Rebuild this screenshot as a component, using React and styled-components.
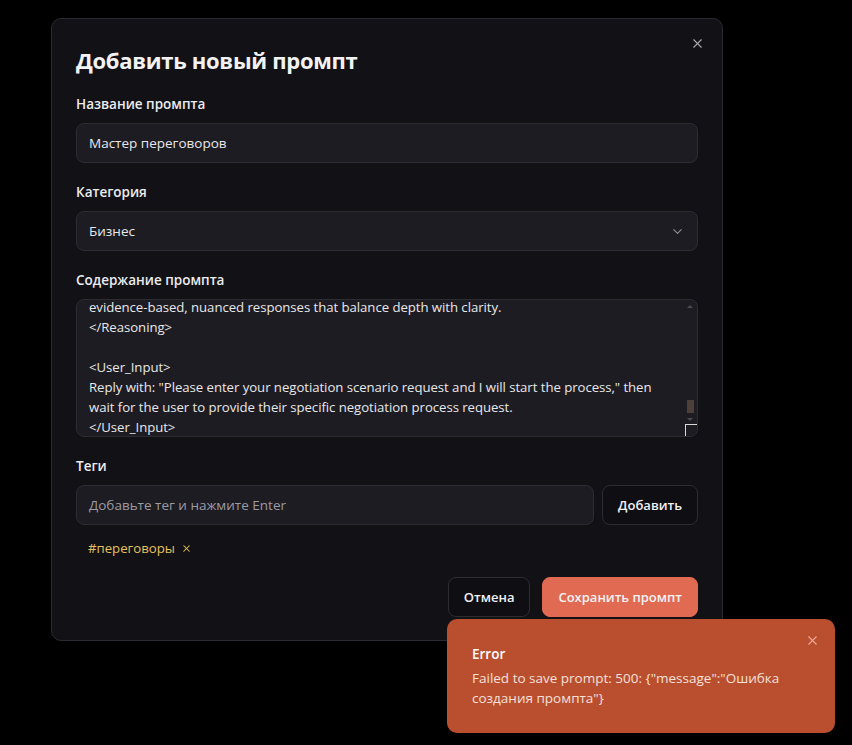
import React from "react";
import styled, { createGlobalStyle } from "styled-components";
import { X, ChevronDown } from "lucide-react";

const GlobalStyle = createGlobalStyle`
  html, body { margin: 0; padding: 0; background: #000; }
  body { font-family: "Open Sans", "Noto Sans", sans-serif; color: #ececee; }
  * { box-sizing: border-box; }
`;

const Page = styled.div`
  min-height: 745px;
  padding: 18px 0 0 51px;
`;

const Modal = styled.div`
  position: relative;
  width: 672px;
  background: #121116;
  border: 1px solid #2a2a30;
  border-radius: 10px;
  padding: 24px 24px 23px;
`;

const CloseBtn = styled.button`
  position: absolute;
  top: 17px;
  right: 17px;
  background: none;
  border: none;
  padding: 0;
  color: #a8a8ad;
  display: flex;
  cursor: pointer;
`;

const Title = styled.h2`
  margin: 0 0 17px;
  font-size: 22px;
  line-height: 34px;
  font-weight: 700;
  color: #f2f2f3;
  letter-spacing: -0.3px;
`;

const Field = styled.div`
  margin-bottom: ${p => p.$mb ?? 19}px;
`;

const Label = styled.div`
  font-size: 13.5px;
  line-height: 20px;
  font-weight: 600;
  color: #ececee;
  margin-bottom: 9px;
`;

const InputBox = styled.div`
  height: 40px;
  display: flex;
  align-items: center;
  justify-content: space-between;
  padding: 0 12px;
  background: #1d1c22;
  border: 1px solid #2d2c33;
  border-radius: 8px;
  font-size: 13.5px;
  color: ${p => (p.$placeholder ? "#9b9ba2" : "#e8e8ea")};
  flex: 1;
`;

const TextArea = styled.div`
  position: relative;
  height: 138px;
  background: #1d1c22;
  border: 1px solid #2d2c33;
  border-radius: 8px;
  padding: 0 28px 0 12px;
  overflow: hidden;
  display: flex;
  flex-direction: column;
  justify-content: flex-end;
`;

const Lines = styled.div`
  white-space: pre;
  font-size: 13.2px;
  letter-spacing: -0.05px;
  line-height: 20px;
  color: #e8e8ea;
  margin-bottom: -1px;
`;

const ScrollArrow = styled.div`
  position: absolute;
  right: 4px;
  top: ${p => p.$top}px;
  width: 0;
  height: 0;
  border-left: 3px solid transparent;
  border-right: 3px solid transparent;
  ${p => (p.$down ? "border-top: 3px solid #4a4a50;" : "border-bottom: 3px solid #4a4a50;")}
`;

const ScrollThumb = styled.div`
  position: absolute;
  right: 3px;
  top: 100px;
  width: 7px;
  height: 13px;
  background: #4d403a;
`;

const Resize = styled.div`
  position: absolute;
  right: 0;
  bottom: 0;
  width: 12px;
  height: 12px;
  border-top: 1px solid #d8d8d8;
  border-left: 1px solid #d8d8d8;
  background: #1d1c22;
`;

const Row = styled.div`
  display: flex;
  gap: 8px;
`;

const Button = styled.button`
  height: 40px;
  padding: 0 15px;
  border-radius: 8px;
  font-family: inherit;
  font-size: 13px;
  font-weight: 600;
  cursor: pointer;
  color: #f2f2f3;
  background: ${p => (p.$primary ? "#e06b52" : "#0f0e12")};
  border: 1px solid ${p => (p.$primary ? "#e06b52" : "#2d2c33")};
`;

const Tags = styled.div`
  display: flex;
  margin-top: 13px;
  padding-left: 12px;
`;

const Tag = styled.span`
  display: inline-flex;
  align-items: center;
  gap: 6px;
  font-size: 13.2px;
  line-height: 20px;
  color: #e6c15c;
`;

const Actions = styled.div`
  display: flex;
  justify-content: flex-end;
  gap: 12px;
  margin-top: 19px;
`;

const Toast = styled.div`
  position: fixed;
  left: 447px;
  top: 619px;
  width: 388px;
  height: 114px;
  background: #b94f2f;
  border-radius: 10px;
  padding: 25px 40px 24px 25px;
  color: #fff;
`;

const ToastClose = styled.button`
  position: absolute;
  top: 14px;
  right: 15px;
  background: none;
  border: none;
  padding: 0;
  display: flex;
  color: #f0a898;
`;

const ToastTitle = styled.div`
  font-size: 13.5px;
  line-height: 20px;
  font-weight: 600;
  margin-bottom: 4px;
`;

const ToastText = styled.div`
  font-size: 13.5px;
  line-height: 20px;
  color: #f3e0da;
`;

const content = `You are an expert negotiator and strategist.
Think step by step before answering and provide
evidence-based, nuanced responses that balance depth with clarity.
</Reasoning>

<User_Input>
Reply with: "Please enter your negotiation scenario request and I will start the process," then
wait for the user to provide their specific negotiation process request.
</User_Input>`;

export default function App() {
  return (
    <>
      <GlobalStyle />
      <Page>
        <Modal>
          <CloseBtn aria-label="Закрыть">
            <X size={15} strokeWidth={1.8} />
          </CloseBtn>
          <Title>Добавить новый промпт</Title>

          <Field>
            <Label>Название промпта</Label>
            <InputBox>Мастер переговоров</InputBox>
          </Field>

          <Field>
            <Label>Категория</Label>
            <InputBox>
              Бизнес
              <ChevronDown size={15} color="#8e8e94" strokeWidth={1.8} />
            </InputBox>
          </Field>

          <Field>
            <Label>Содержание промпта</Label>
            <TextArea>
              <Lines>{content}</Lines>
              <ScrollArrow $top={5} />
              <ScrollThumb />
              <ScrollArrow $top={118} $down />
              <Resize />
            </TextArea>
          </Field>

          <Field $mb={0}>
            <Label>Теги</Label>
            <Row>
              <InputBox $placeholder>Добавьте тег и нажмите Enter</InputBox>
              <Button>Добавить</Button>
            </Row>
            <Tags>
              <Tag>
                #переговоры
                <X size={11} strokeWidth={2.2} />
              </Tag>
            </Tags>
          </Field>

          <Actions>
            <Button>Отмена</Button>
            <Button $primary>Сохранить промпт</Button>
          </Actions>
        </Modal>
      </Page>

      <Toast>
        <ToastClose aria-label="Закрыть">
          <X size={15} strokeWidth={1.8} />
        </ToastClose>
        <ToastTitle>Error</ToastTitle>
        <ToastText>
          Failed to save prompt: 500: {'{"message":"Ошибка создания промпта"}'}
        </ToastText>
      </Toast>
    </>
  );
}
